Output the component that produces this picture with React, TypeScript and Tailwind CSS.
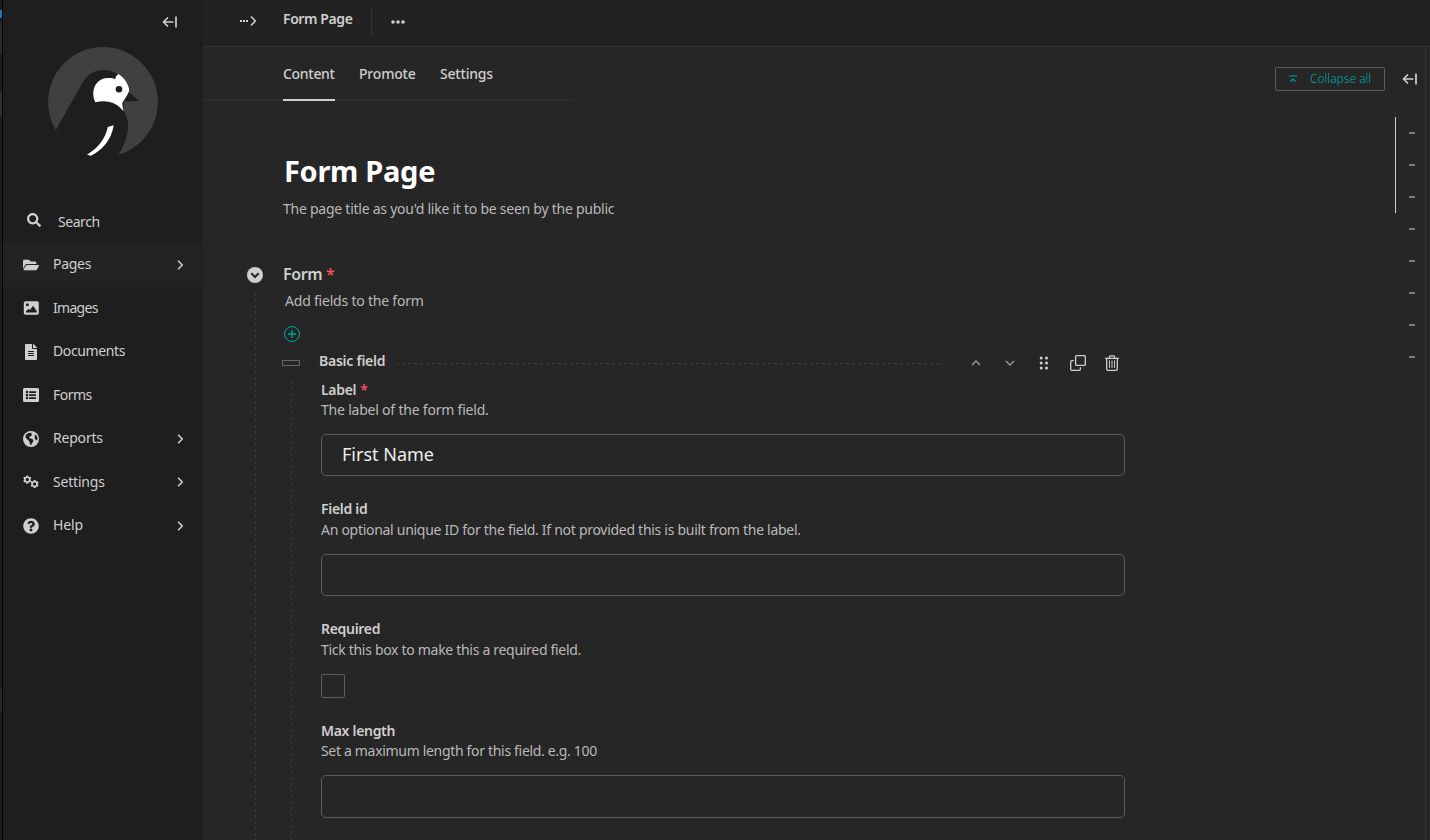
import React from 'react';
import { FaSearch, FaFolderOpen, FaFileAlt, FaListAlt, FaCog, FaQuestionCircle } from 'react-icons/fa';

const ink = '#cfcfcf';

function Chevron() {
  return (
    <svg width="7" height="10" viewBox="0 0 7 10" fill="none" stroke={ink} strokeWidth="1.6" strokeLinecap="round" strokeLinejoin="round">
      <path d="M1.5 1.2 L5.3 5 L1.5 8.800" />
    </svg>
  );
}

function CollapseArrow() {
  return (
    <svg width="16" height="12" viewBox="0 0 16 12" fill="none" stroke={ink} strokeWidth="1.7">
      <path d="M5.5 2 L1.500 6 L5.500 10 M1.500 6 H10.800" strokeLinecap="round" strokeLinejoin="round" />
      <path d="M14 0.500 V11.500" />
    </svg>
  );
}

function Bird() {
  return (
    <svg width="110" height="110" viewBox="0 0 110 110">
      <defs>
        <clipPath id="disc"><circle cx="55" cy="55" r="55" /></clipPath>
      </defs>
      <circle cx="55" cy="55" r="54.900" fill="#404040" />
      <g clipPath="url(#disc)">
        <path d="M7.500 83.500 L33 38.500 C38 28 45 23 56 23 C64 23 71 27 75 33 L81.300 45.500 L91.500 54.200 H76 L75.500 63 C79 68 80.500 75 80 82 C79 92 75 101 69.500 109 L40 112 L6 100 Z" fill="#1e1e1e" />
      </g>
      <path d="M47.300 55.300 C42 43 48 32 59 31 C62 30.700 65 31 67.300 32.200 C67.300 30 68.500 28.500 70.500 27 C75 30 78.500 34 80.200 39 C81 41 81.500 43 80.800 45 C79 49 76 53 74.300 56 C74.300 59 75 61 75.500 64.300 C70 56 59 52 47.300 55.300 Z" fill="#fff" />
      <circle cx="71" cy="42.300" r="3.300" fill="#1e1e1e" />
      <path d="M59.700 80 L65.800 78.200 C63 94 54 103 43 108.700 L39 107.800 C50 101 58 91 59.700 80 Z" fill="#fff" />
    </svg>
  );
}

function ImageIcon() {
  return (
    <svg width="16" height="16" viewBox="0 0 16 16">
      <rect x=".8" y="1.300" width="15" height="13.500" rx="1.800" fill={ink} />
      <circle cx="4.400" cy="4.700" r="1.500" fill="#1e1e1e" />
      <path d="M3 12.500 V11.300 L5.600 8.700 L7 10 L10 5.800 L13.700 11 V12.500 Z" fill="#1e1e1e" />
    </svg>
  );
}

function GlobeIcon() {
  return (
    <svg width="16" height="16" viewBox="0 0 16 16">
      <circle cx="8" cy="8" r="8" fill={ink} />
      <path d="M3.200 3.600 L5.500 1.900 L8.600 1.700 L8 3.200 L9.400 3.600 L8.200 5 L6.700 5.500 L6 7 L8 7.600 L10.500 8.800 L10 11 L8.700 12.300 L8.300 14.300 L7 13.500 L6.500 10.800 L5 9 L3 7.200 L2.400 5.500 Z M11.400 3.600 L13.300 4.300 L14.500 6.700 L14.300 9.600 L12.600 8.700 L11.400 6.700 L12 5.300 Z" fill="#1e1e1e" />
    </svg>
  );
}

function CogsIcon() {
  return (
    <svg width="16" height="16" viewBox="0 0 16 16">
      <FaCog x="0" y="1.300" size={8.6} />
      <FaCog x="7.300" y="5.700" size={8.6} />
      <circle cx="4.300" cy="5.600" r="1.600" fill="#1e1e1e" />
      <circle cx="11.600" cy="10" r="1.600" fill="#1e1e1e" />
    </svg>
  );
}

const nav = [
  { label: 'Pages', icon: <FaFolderOpen size={16} />, arrow: true, active: true, track: 'tracking-[-0.3px]' },
  { label: 'Images', icon: <ImageIcon />, track: 'tracking-[-0.7px]' },
  { label: 'Documents', icon: <FaFileAlt size={16} />, track: 'tracking-[-0.38px]' },
  { label: 'Forms', icon: <FaListAlt size={16} />, track: 'tracking-[-0.5px]' },
  { label: 'Reports', icon: <GlobeIcon />, arrow: true, track: 'tracking-[-0.2px]' },
  { label: 'Settings', icon: <CogsIcon />, arrow: true, track: 'tracking-[-0.2px]' },
  { label: 'Help', icon: <FaQuestionCircle size={16} />, arrow: true, track: 'tracking-[-0.15px]' },
];

function Sidebar() {
  return (
    <aside className="flex w-[200px] shrink-0 flex-col bg-[#1e1e1e]">
      <div className="flex h-[47px] justify-end pr-[25px] pt-4"><CollapseArrow /></div>
      <div className="pl-[45px]"><Bird /></div>
      <div className="mt-[43px] flex h-[43px] items-center pl-6">
        <FaSearch size={14} className="mb-1" />
        <span className="ml-[17px] text-[14px] tracking-[-0.45px]">Search</span>
      </div>
      <nav className="flex flex-col">
        {nav.map((n) => (
          <div key={n.label} className={'flex h-[43.5px] items-center pl-5 pr-[19px] ' + (n.active ? 'bg-[#232323]' : '')}>
            <span className="w-[30px]">{n.icon}</span>
            <span className={'flex-1 pb-[2px] text-[14px] ' + n.track}>{n.label}</span>
            {n.arrow && <Chevron />}
          </div>
        ))}
      </nav>
    </aside>
  );
}

type FieldProps = {
  title: string;
  help: string;
  value?: string;
  required?: boolean;
  className: string;
  helpClass: string;
  boxClass: string;
};

function Field({ title, help, value, required, className, helpClass, boxClass }: FieldProps) {
  return (
    <div className={className}>
      <div className="h-5 text-[14px] font-semibold leading-5 tracking-[-0.3px]">{title}{required && <span className="ml-1 text-[#f55260]">*</span>}</div>
      <div className={'whitespace-nowrap text-[14px] text-[#b9b9b9] ' + helpClass}>{help}</div>
      <div className={'mt-[14px] flex w-[804px] items-center rounded-[5px] border border-[#5c5c5c] pb-[2px] pl-5 text-[18px] tracking-[0px] text-[#eee] ' + boxClass}>{value}</div>
    </div>
  );
}

function DashedV() {
  return <div className="h-full w-px bg-[repeating-linear-gradient(to_bottom,#3a3a3a_0_3px,transparent_3px_6px)]" />;
}

function BlockActions() {
  return (
    <div className="flex items-center">
      <svg width="10" height="6" viewBox="0 0 10 6" fill="none" stroke="#999" strokeWidth="1.4"><path d="M1 5 L5 1 L9 5" /></svg>
      <svg className="ml-6" width="10" height="6" viewBox="0 0 10 6" fill="none" stroke="#999" strokeWidth="1.4"><path d="M1 1 L5 5 L9 1" /></svg>
      <svg className="ml-6" width="10" height="14" viewBox="0 0 10 14" fill={ink}>
        {[2, 7, 12].map((y) => <g key={y}><circle cx="2.200" cy={y} r="1.500" /><circle cx="7.500" cy={y} r="1.500" /></g>)}
      </svg>
      <svg className="ml-[21px]" width="16" height="16" viewBox="0 0 16 16" fill="none" stroke={ink} strokeWidth="1.300">
        <rect x="5.600" y=".7" width="9.700" height="9.700" rx="1" />
        <path d="M3.800 5.600 H2 Q.7 5.600 .7 6.900 V14 Q.7 15.300 2 15.300 H9 Q10.400 15.300 10.400 14 V12.200" />
      </svg>
      <svg className="ml-[19px]" width="14" height="16" viewBox="0 0 14 16" fill="none" stroke={ink} strokeWidth="1.300">
        <path d="M0 3.300 H14 M4 3 L5 .8 H9 L10 3 M1.700 3.300 V14 Q1.700 15.300 3 15.300 H11 Q12.300 15.300 12.300 14 V3.300" />
        <path d="M4.500 5.500 V13 M7 5.500 V13 M9.500 5.500 V13" strokeWidth="1" />
      </svg>
    </div>
  );
}

export default function App() {
  return (
    <div className="flex h-[840px] w-[1430px] overflow-hidden bg-[#262626] text-[#cfcfcf] [font-family:'Noto_Sans',sans-serif]">
      <div className="flex w-[3px] shrink-0 flex-col border-r border-black bg-[#1c1c1c]">
        <div className="mt-[10px] h-2 bg-[#1b74b8]" />
        <div className="mt-[3px] h-[33px] bg-[#2a2a2a]" />
        <div className="mt-[38px] h-6 bg-[#303030]" />
        <div className="mt-[572px] h-[25px] bg-[#272727]" />
      </div>
      <Sidebar />
      <main className="flex min-w-0 flex-1 flex-col">
        <header className="-mr-1 flex h-[47px] shrink-0 border-b border-[#333] bg-[#222] pl-9">
          <svg className="mt-[15px]" width="18" height="12" viewBox="0 0 18 12" fill={ink}>
            <path d="M1 5h2v2H1zM4 5h2v2H4zM7 5h2v2H7z" />
            <path d="M12 1.500 L16.300 6 L12 10.500" fill="none" stroke={ink} strokeWidth="1.600" />
          </svg>
          <div className="ml-[26px] mt-[9px] w-[88px] whitespace-nowrap text-[14px] font-semibold leading-5 tracking-[-0.4px]">Form Page</div>
          <div className="mt-[6px] h-[30px] w-px bg-[#333]" />
          <svg className="ml-[19px] mt-5" width="14" height="4" viewBox="0 0 14 4" fill={ink}><circle cx="2" cy="2" r="1.800" /><circle cx="7" cy="2" r="1.800" /><circle cx="12" cy="2" r="1.800" /></svg>
        </header>
        <div className="flex min-h-0 flex-1">
          <div className="flex w-[1032px] shrink-0 flex-col">
            <div className="flex h-[54px] w-[370px] shrink-0 border-b border-[#313131] pl-20 text-[14px] font-medium leading-5">
              <div className="-mb-px w-[52px] border-b-2 border-[#cfcfcf] pt-[17px] tracking-[-0.3px]">Content</div>
              <div className="ml-6 w-14 pt-[17px] tracking-[-0.2px]">Promote</div>
              <div className="ml-[25px] pt-[17px] tracking-[-0.2px]">Settings</div>
            </div>
            <h1 className="ml-[81px] mt-[50px] h-10 text-[29px] font-bold leading-10 tracking-[-0.3px] text-white">Form Page</h1>
            <p className="ml-20 mt-[7px] h-[21px] text-[14px] leading-[21px] tracking-[-0.25px] text-[#b9b9b9]">The page title as you'd like it to be seen by the public</p>
            <div className="mt-[44px] flex min-h-0 flex-1 pl-11">
              <div className="flex w-4 shrink-0 flex-col items-center">
                <svg className="mt-1 shrink-0" width="16" height="16" viewBox="0 0 16 16"><circle cx="8" cy="8" r="8" fill={ink} /><path d="M4.300 6.300 L8 10 L11.700 6.300" fill="none" stroke="#262626" strokeWidth="2" /></svg>
                <div className="mt-[10px] min-h-0 flex-1"><DashedV /></div>
              </div>
              <div className="ml-5 flex min-w-0 flex-1 flex-col">
                <div className="h-[22px] text-[16px] font-semibold leading-[22px] tracking-[-0.4px]">Form <span className="text-[#f55260]">*</span></div>
                <div className="ml-[2px] mt-[5px] h-[21px] text-[14px] leading-[21px] tracking-[-0.21px] text-[#b9b9b9]">Add fields to the form</div>
                <svg className="ml-[1px] mt-[15px] shrink-0" width="16" height="16" viewBox="0 0 16 16" fill="none" stroke="#00a5a5" strokeWidth="1"><circle cx="8" cy="8" r="7.500" /><path d="M4 8 H12 M8 4 V12" strokeWidth="1.300" /></svg>
                <div className="mt-2 flex h-[26px] shrink-0 items-center">
                  <div className="-ml-px h-[6px] w-[18px] border border-[#666]" />
                  <div className="ml-[19px] w-[77px] pb-[5px] text-[14px] font-semibold tracking-[-0.25px]">Basic field</div>
                  <div className="h-px w-[547px] bg-[repeating-linear-gradient(to_right,#3b3b3b_0_3px,transparent_3px_6px)]" />
                  <div className="ml-7"><BlockActions /></div>
                </div>
                <div className="flex min-h-0 flex-1">
                  <div className="ml-2 pt-[5px]"><DashedV /></div>
                  <div className="ml-[29px] pt-1">
                    <Field className="h-[119px]" helpClass="h-5 leading-[19px] tracking-[-0.21px]" boxClass="h-[42px]" title="Label" required help="The label of the form field." value="First Name" />
                    <Field className="h-[120px]" helpClass="h-[21px] leading-[21px] tracking-[-0.285px]" boxClass="h-[42px]" title="Field id" help="An optional unique ID for the field. If not provided this is built from the label." />
                    <div className="h-[102px]">
                      <div className="h-5 text-[14px] font-semibold leading-5 tracking-[-0.3px]">Required</div>
                      <div className="h-[21px] text-[14px] leading-[21px] tracking-[-0.3px] text-[#b9b9b9]">Tick this box to make this a required field.</div>
                      <div className="mt-[14px] h-6 w-6 rounded-[2px] border border-[#5c5c5c]" />
                    </div>
                    <Field className="h-[120px]" helpClass="h-5 leading-[19px] tracking-[-0.32px]" boxClass="h-[43px]" title="Max length" help="Set a maximum length for this field. e.g. 100" />
                  </div>
                </div>
              </div>
            </div>
          </div>
          <div className="flex flex-1 flex-col border-r border-[#363636] pl-10 pt-5">
            <div className="flex items-center">
              <div className="flex h-6 w-[110px] items-center rounded-[2px] border border-[#5c5c5c] pl-[13px] text-[12px] font-light text-[#00a5a5]">
                <svg width="8" height="8" viewBox="0 0 9 8" fill="none" stroke="#00a5a5" strokeWidth="1.200"><path d="M0 .7 H9 M1.500 7 L4.500 4 L7.500 7" /></svg>
                <span className="ml-[13px] whitespace-nowrap">Collapse all</span>
              </div>
              <div className="ml-[17px] shrink-0"><CollapseArrow /></div>
            </div>
            <div className="mt-[26px] flex pl-[120px]">
              <div className="h-24 w-px bg-[#cfcfcf]" />
              <div className="ml-[13px] mt-[15px] flex flex-col gap-[30px]">
                {[0, 1, 2, 3, 4, 5, 6, 7].map((i) => <div key={i} className="h-[2px] w-[6px] bg-[#7c7c7c]" />)}
              </div>
            </div>
          </div>
        </div>
      </main>
      <div className="w-1 shrink-0" />
    </div>
  );
}
